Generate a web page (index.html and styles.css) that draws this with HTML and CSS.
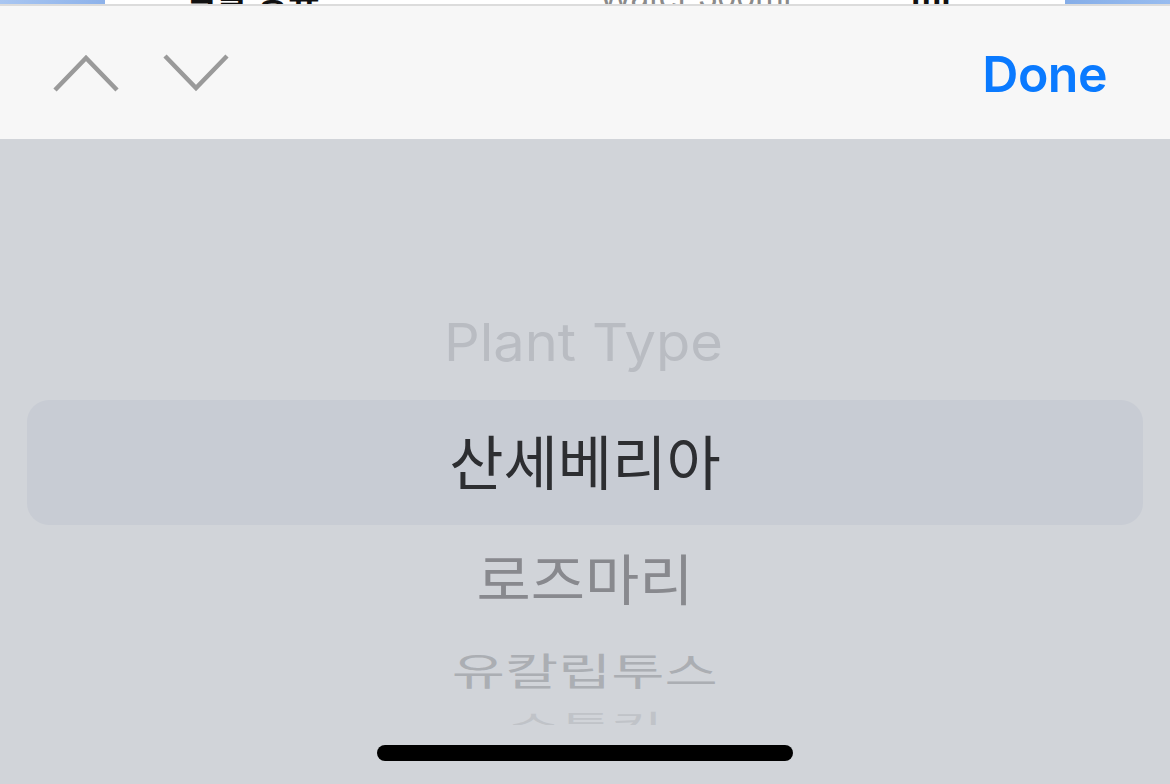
FILE: index.html
```html
<!DOCTYPE html>
<html lang="ko">
<head>
<meta charset="utf-8">
<title>Plant Type Picker</title>
<link rel="stylesheet" href="styles.css">
</head>
<body>
<div class="screen">
  <div class="peek">
    <div class="peek-edge"></div>
    <div class="peek-content">
      <span class="peek-text dark t1">식물 종류</span>
      <span class="peek-text light t2">Water 300ml</span>
      <span class="peek-text dark t3">ml</span>
    </div>
    <div class="peek-edge right"></div>
  </div>

  <div class="toolbar">
    <div class="nav-arrows">
      <svg class="chev" width="66" height="38" viewBox="0 0 66 38" aria-label="Previous">
        <path d="M2 36 L33 4 L64 36" fill="none" stroke="#9a9a9a" stroke-width="4.5"/>
      </svg>
      <svg class="chev" width="66" height="38" viewBox="0 0 66 38" aria-label="Next">
        <path d="M2 2 L33 34 L64 2" fill="none" stroke="#9a9a9a" stroke-width="4.5"/>
      </svg>
    </div>
    <div class="done">Done</div>
  </div>

  <div class="picker">
    <div class="wheel">
      <div class="row r-title"><span class="label latin">Plant Type</span></div>
      <div class="row r-selected"><span class="label">산세베리아</span></div>
      <div class="row r-next1"><span class="label">로즈마리</span></div>
      <div class="row r-next2"><span class="label">유칼립투스</span></div>
      <div class="row r-next3"><span class="label">스투키</span></div>
    </div>
    <div class="home-indicator"></div>
  </div>
</div>
</body>
</html>
```

FILE: styles.css
```css
* { box-sizing: border-box; }
html, body { margin: 0; padding: 0; }
body {
  width: 1170px;
  height: 784px;
  overflow: hidden;
  font-family: "Noto Sans CJK KR", "Noto Sans", sans-serif;
  background: #d1d4d9;
}
.screen {
  display: flex;
  flex-direction: column;
  height: 784px;
}

/* peeking content at top */
.peek {
  display: flex;
  height: 6px;
  border-bottom: 2px solid #dcdcdc;
  overflow: hidden;
  background: #ffffff;
}
.peek-edge {
  width: 105px;
  background: linear-gradient(90deg, #a9c6f1, #8db2ea);
}
.peek-edge.right {
  background: linear-gradient(90deg, #86aee8, #98bcef);
}
.peek-content {
  flex: 1;
  display: flex;
  align-items: flex-end;
  height: 4px;
}
.peek-text {
  font-family: "Liberation Sans", "Noto Sans CJK KR", sans-serif;
  font-size: 34px;
  line-height: 1;
  margin-bottom: -9px;
  white-space: nowrap;
}
.peek-text.dark { color: #111; font-weight: 700; }
.peek-text.light { color: #8a8a8a; }
.t1 { margin-left: 80px; }
.t2 { margin-left: 280px; }
.t3 { margin-left: 120px; }

/* toolbar */
.toolbar {
  height: 133px;
  background: #f7f7f7;
  display: flex;
  align-items: center;
  justify-content: space-between;
  padding: 0 63px 0 53px;
}
.nav-arrows {
  display: flex;
  gap: 44px;
  align-items: center;
}
.chev { display: block; }
.done {
  font-family: Inter, "Liberation Sans", sans-serif;
  font-weight: 600;
  font-size: 50px;
  color: #0a7aff;
  letter-spacing: -0.5px;
  margin-top: 2px;
}

/* picker */
.picker {
  flex: 1;
  display: flex;
  flex-direction: column;
  background: #d1d4d9;
}
.wheel {
  height: 586px;
  overflow: hidden;
  padding-top: 145px;
  display: flex;
  flex-direction: column;
}
.row {
  display: flex;
  align-items: center;
  justify-content: center;
  flex-shrink: 0;
}
.label {
  display: block;
  font-size: 59px;
  letter-spacing: 0;
  line-height: 1;
  white-space: nowrap;
  margin-bottom: 6px;
}
.label.latin {
  font-family: Inter, "Liberation Sans", sans-serif;
  font-size: 56px;
  margin-bottom: 0;
  margin-left: -3px;
}
.r-title { height: 116px; }
.r-title .label { color: #b9bcc2; transform: scaleY(0.93); }
.r-selected {
  height: 125px;
  margin: 0 27px;
  background: #c8ccd4;
  border-radius: 22px;
}
.r-selected .label { color: #2d2e31; }
.r-next1 { height: 108px; }
.r-next1 .label { color: #88898e; transform: scale(1, 0.93); }
.r-next2 { height: 76px; }
.r-next2 .label { color: #abaeb3; transform: scale(0.98, 0.64); }
.r-next3 { height: 32px; }
.r-next3 .label { color: #c0c3c8; transform: scale(0.95, 0.45); }

.home-indicator {
  width: 416px;
  height: 16px;
  border-radius: 8px;
  background: #000;
  margin: 20px auto 0;
}
```
